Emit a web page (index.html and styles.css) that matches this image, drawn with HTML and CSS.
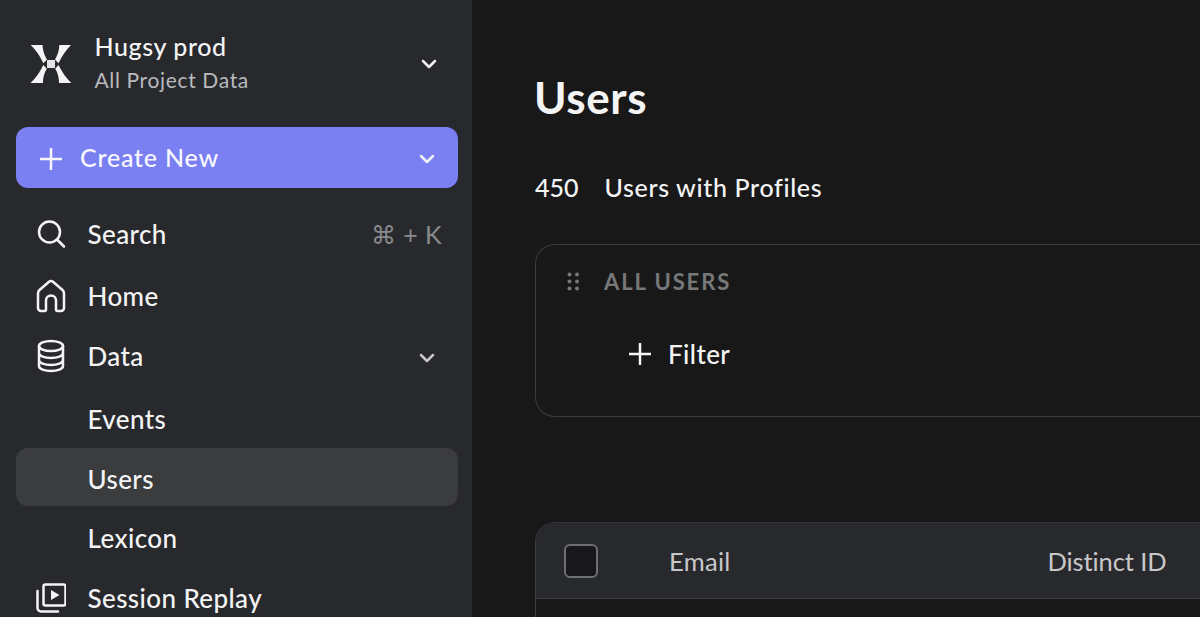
FILE: index.html
```html
<!DOCTYPE html>
<html lang="en">
<head>
<meta charset="utf-8">
<title>Users</title>
<link rel="stylesheet" href="styles.css">
</head>
<body>
<div class="app">
  <aside class="sidebar">
    <div class="project">
      <svg class="logo" viewBox="0 0 42 40" width="42" height="40"><path fill="#f4f4f4" d="M0.700 1H12.500C13 8 15 12 17 15.500L13.300 19.200C10 12 6 6 0.700 1ZM41 1H29.300C29 8 27 12 25 15.500L28.500 19.200C32 12 36 6 41 1ZM0.500 39H13C13 32 15 28 16.800 24.800L13.300 21C10 28 6 34 0.500 39ZM41.300 39H29C29 32 27 28 25.200 24.800L28.500 21C32 28 36 34 41.300 39Z"/><rect x="17" y="16" width="8" height="8" fill="#e4e4e4"/></svg>
      <div class="project-text">
        <div class="project-name">Hugsy prod</div>
        <div class="project-sub">All Project Data</div>
      </div>
      <svg class="chev" viewBox="0 0 16 10" width="16" height="10"><path d="M2 2l6 6 6-6"/></svg>
    </div>
    <button class="create">
      <svg class="plus" viewBox="0 0 22 22" width="22" height="22"><path d="M11 0v22M0 11h22"/></svg>
      <span class="create-label">Create New</span>
      <svg class="chev" viewBox="0 0 16 10" width="16" height="10"><path d="M2 2l6 6 6-6"/></svg>
    </button>
    <nav class="nav">
      <div class="item search">
        <svg class="icon" viewBox="0 0 30 30" width="30" height="30"><circle cx="13.500" cy="13" r="10.500"/><path d="M21 20.500l7 7"/></svg>
        <span class="label">Search</span>
        <span class="kbd">⌘ + K</span>
      </div>
      <div class="item home">
        <svg class="icon" viewBox="0 0 30 34" width="30" height="34"><path d="M2 14.500Q2 12.500 3.500 11L13 2.800Q15 1.200 17 2.800L26.500 11Q28 12.500 28 14.500V29a3 3 0 0 1-3 3h-3.500a1.500 1.500 0 0 1-1.500-1.500V21.500a5 5 0 0 0-10 0v9A1.500 1.500 0 0 1 8.500 32H5a3 3 0 0 1-3-3z"/></svg>
        <span class="label">Home</span>
      </div>
      <div class="item data">
        <svg class="icon" viewBox="0 0 30 34" width="30" height="34"><ellipse cx="15" cy="7" rx="12" ry="5"/><path d="M3 7v20c0 3 5.500 5 12 5s12-2 12-5V7M3 14c0 3 5.500 5 12 5s12-2 12-5M3 21c0 3 5.500 5 12 5s12-2 12-5"/></svg>
        <span class="label">Data</span>
        <svg class="chev dim" viewBox="0 0 16 10" width="16" height="10"><path d="M2 2l6 6 6-6"/></svg>
      </div>
      <div class="item sub events"><span class="label">Events</span></div>
      <div class="item sub active"><span class="label">Users</span></div>
      <div class="item sub lexicon"><span class="label">Lexicon</span></div>
      <div class="item replay">
        <svg class="icon" viewBox="0 0 30 30" width="30" height="30"><rect x="7.500" y="1.500" width="22" height="21" rx="2"/><path class="fill" d="M15 7l8.500 5-8.500 5z"/><path d="M1.500 8v17a3.500 3.500 0 0 0 3.500 3.500h17"/></svg>
        <span class="label">Session Replay</span>
      </div>
    </nav>
  </aside>
  <main class="main">
    <h1 class="title">Users</h1>
    <div class="stats"><span class="stat-count">450</span><span class="stat-name">Users with Profiles</span></div>
    <section class="filter-card">
      <div class="filter-head">
        <svg class="grip" viewBox="0 0 13 19" width="13" height="19"><circle cx="2.500" cy="2.500" r="2"/><circle cx="10" cy="2.500" r="2"/><circle cx="2.500" cy="9.500" r="2"/><circle cx="10" cy="9.500" r="2"/><circle cx="2.500" cy="16.500" r="2"/><circle cx="10" cy="16.500" r="2"/></svg>
        <span class="filter-title">ALL USERS</span>
      </div>
      <div class="filter-add">
        <svg class="plus" viewBox="0 0 22 22" width="22" height="22"><path d="M11 0v22M0 11h22"/></svg>
        <span>Filter</span>
      </div>
    </section>
    <section class="table">
      <div class="thead">
        <span class="check"></span>
        <span class="col-email">Email</span>
        <span class="col-id">Distinct ID</span>
      </div>
    </section>
  </main>
</div>
</body>
</html>
```
FILE: styles.css
```css
* { box-sizing: border-box; }
html, body { margin: 0; height: 100%; overflow: hidden; }
body { background: #181819; color: #f4f4f5; font-family: Lato, "Open Sans", sans-serif; font-size: 26px; }
.app { display: flex; height: 617px; overflow: hidden; }
.sidebar { flex: 0 0 473px; background: #28292d; border-right: 1px solid #1a1a1b; padding: 0 14px 0 16px; overflow: hidden; }
.project { display: flex; align-items: center; height: 127px; padding: 0 21px 0 14px; }
.logo { flex: none; }
.project-text { flex: 1; margin-left: 22.500px; }
.project-name { font-size: 25px; line-height: 31px; font-weight: 500; letter-spacing: .6px; }
.project-sub { margin-top: 2px; font-size: 21px; line-height: 32px; color: #b9babd; letter-spacing: .65px; }
.chev { flex: none; fill: none; stroke: #f4f4f5; stroke-width: 2.500; stroke-linecap: round; stroke-linejoin: round; }
.chev.dim { stroke: #c8c8cb; margin-top: 3px; }
.plus { flex: none; fill: none; stroke: #f6f6fa; stroke-width: 2.500; stroke-linecap: round; }
.create { display: flex; align-items: center; width: 442px; height: 61px; border: 0; border-radius: 12px; background: #7a7ff1; color: #f8f8ff; font: inherit; padding: 2px 23px 0 24px; }
.create-label { flex: 1; text-align: left; margin: -4px 0 0 18px; font-size: 25px; font-weight: 500; letter-spacing: .8px; }
.nav { display: flex; flex-direction: column; width: 442px; margin-top: 16px; }
.item { display: flex; align-items: center; height: 60px; padding: 0 16px 0 20px; }
.icon { flex: none; fill: none; stroke: #f4f4f5; stroke-width: 2.500; stroke-linecap: round; stroke-linejoin: round; }
.icon .fill { fill: #f4f4f5; stroke: none; }
.label { flex: 1; margin-left: 21.500px; letter-spacing: .4px; font-weight: 500; }
.kbd { color: #88898c; font-size: 25px; letter-spacing: .4px; }
.home { margin-top: 2px; }
.data { padding-right: 23px; }
.sub { padding-left: 71.500px; height: 58px; }
.sub .label { margin-left: 0; }
.events { margin-top: 4px; }
.active { background: #3b3c3e; border-radius: 12px; padding-top: 4px; }
.lexicon { margin-top: 3px; }
.replay { margin-top: 1px; }
.main { flex: 1; padding: 0 0 0 62px; overflow: hidden; min-width: 0; }
.title { margin: 67px 0 0 -1px; font-size: 44px; line-height: 60px; font-weight: 700; letter-spacing: .6px; }
.stats { display: flex; gap: 26px; margin-top: 44px; line-height: 32px; font-size: 25px; font-weight: 500; }
.stat-count { letter-spacing: 0; }
.stat-name { letter-spacing: .65px; }
.filter-card { margin-top: 41px; height: 173px; width: 720px; border: 1px solid #3c3c3e; border-right: 0; border-radius: 20px 0 0 20px; padding: 23px 0 0 31px; }
.filter-head { display: flex; align-items: center; gap: 24px; height: 26px; }
.grip { fill: #77787a; }
.filter-title { font-size: 22px; font-weight: 700; color: #77787a; letter-spacing: 1.900px; }
.filter-add { display: flex; align-items: center; gap: 17px; margin: 47px 0 0 62px; font-weight: 500; letter-spacing: .4px; height: 26px; }
.table { margin-top: 105px; width: 720px; height: 140px; border-left: 1px solid #3c3c3e; border-top: 1px solid #333436; border-radius: 20px 0 0 0; overflow: hidden; }
.thead { display: flex; align-items: center; height: 76px; background: #28292d; border-bottom: 1px solid #3c3c3e; color: #c8c8ca; padding-left: 28px; font-size: 25.500px; letter-spacing: .3px; }
.check { width: 34px; height: 34px; flex: none; background: #18181a; border: 2px solid #6e6f72; border-radius: 6px; }
.col-email { margin-left: 71px; width: 378.500px; flex: none; }
.col-id { letter-spacing: -.1px; }
```
